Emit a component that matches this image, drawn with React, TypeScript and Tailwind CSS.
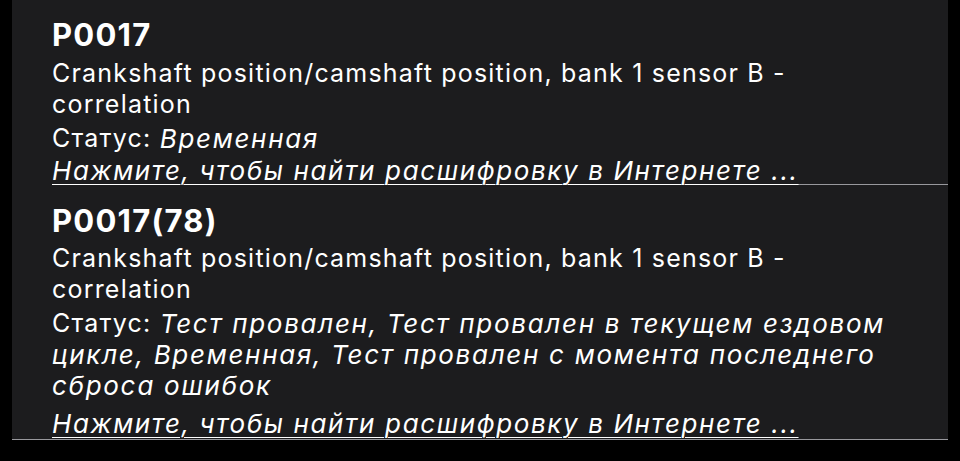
import React from "react";

type Code = {
  id: string;
  description: string[];
  status: string[];
};

// line breaks are kept explicit so the wrap matches the device layout
const codes: Code[] = [
  {
    id: "P0017",
    description: ["Crankshaft position/camshaft position, bank 1 sensor B -", "correlation"],
    status: ["Временная"],
  },
  {
    id: "P0017(78)",
    description: ["Crankshaft position/camshaft position, bank 1 sensor B -", "correlation"],
    status: [
      "Тест провален, Тест провален в текущем ездовом",
      "цикле, Временная, Тест провален с момента последнего",
      "сброса ошибок",
    ],
  },
];

function Lines({ lines }: { lines: string[] }) {
  return (
    <>
      {lines.map((l, i) => (
        <React.Fragment key={i}>
          {i > 0 && <br />}
          {l}
        </React.Fragment>
      ))}
    </>
  );
}

function CodeCell({ code, last }: { code: Code; last: boolean }) {
  return (
    <div className={last ? "pl-[40px] border-b border-[#98989d]" : "pl-[40px]"}>
      <div
        className={
          last
            ? "flex flex-col pt-[18px] pr-[8px]"
            : "flex flex-col pt-[17px] pr-[8px] border-b border-[#98989d]"
        }
      >
        <div className="text-[31px] leading-[36px] font-bold tracking-[0.04em]">{code.id}</div>
        <div className={last ? "mt-[4px] whitespace-nowrap" : "mt-[5px] whitespace-nowrap"}>
          <Lines lines={code.description} />
        </div>
        <div className="mt-[3px] whitespace-nowrap">
          Статус:{" "}
          <span className="italic text-[26px] tracking-[1.7px] align-top">
            <Lines lines={code.status} />
          </span>
        </div>
        <a
          href="#"
          className={
            last
              ? "mt-[7px] italic text-[26px] tracking-[1.6px] underline underline-offset-[4px] decoration-1 whitespace-nowrap"
              : "mt-[1px] -mb-[2px] italic text-[26px] tracking-[1.6px] underline underline-offset-[4px] decoration-1 whitespace-nowrap"
          }
        >
          Нажмите, чтобы найти расшифровку в Интернете ...
        </a>
      </div>
    </div>
  );
}

export default function App() {
  return (
    <div
      className="w-[960px] h-[461px] bg-black px-[12px] overflow-hidden"
      style={{ fontFamily: "Inter, 'Noto Sans', sans-serif" }}
    >
      <div className="bg-[#1c1c1e] text-white text-[25px] leading-[31px] tracking-[0.048em]">
        {codes.map((c, i) => (
          <CodeCell key={c.id} code={c} last={i === codes.length - 1} />
        ))}
      </div>
    </div>
  );
}
